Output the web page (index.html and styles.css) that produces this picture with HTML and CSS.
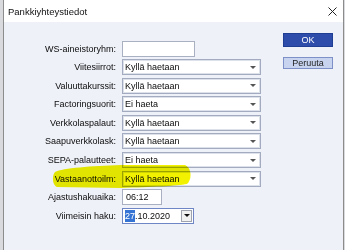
FILE: index.html
```html
<!DOCTYPE html>
<html lang="fi">
<head>
    <meta charset="UTF-8">
    <title>Pankkiyhteystiedot</title>
    <link rel="stylesheet" href="styles.css">
</head>
<body>

    <div class="window">
        <div class="titlebar">
            <span class="title">Pankkiyhteystiedot</span>
            <svg class="close" width="9" height="9" viewBox="0 0 9 9">
                <path d="M0.5 0.5 L8.5 8.5 M8.5 0.5 L0.5 8.5" stroke="#222" stroke-width="1"/>
            </svg>
        </div>

        <div class="content">
            <div class="form">
                <label>WS-aineistoryhm:</label>
                <div class="field ws"></div>

                <label>Viitesiirrot:</label>
                <div class="select"><span>Kyllä haetaan</span><i class="arrow"></i></div>

                <label>Valuuttakurssit:</label>
                <div class="select"><span>Kyllä haetaan</span><i class="arrow"></i></div>

                <label>Factoringsuorit:</label>
                <div class="select"><span>Ei haeta</span><i class="arrow"></i></div>

                <label>Verkkolaspalaut:</label>
                <div class="select"><span>Kyllä haetaan</span><i class="arrow"></i></div>

                <label>Saapuverkkolask:</label>
                <div class="select"><span>Kyllä haetaan</span><i class="arrow"></i></div>

                <label>SEPA-palautteet:</label>
                <div class="select"><span>Ei haeta</span><i class="arrow"></i></div>

                <label>Vastaanottoilm:</label>
                <div class="select"><span>Kyllä haetaan</span><i class="arrow"></i></div>

                <label>Ajastushakuaika:</label>
                <div class="field time">06:12</div>

                <label>Viimeisin haku:</label>
                <div class="field date">
                    <span><span class="selected">27</span>.10.2020</span>
                    <span class="drop"><i class="arrow dark"></i></span>
                </div>
            </div>

            <div class="buttons">
                <button class="ok">OK</button>
                <button class="cancel">Peruuta</button>
            </div>
        </div>

        <!-- yellow marker stroke drawn over the form -->
        <svg class="marker" viewBox="3 0 341 250" width="341" height="250">
            <path d="M54 172 C51 175, 51 185, 56 187 L120 188 C150 187, 176 186, 186 184 C191 180, 191 168, 184 165 L120 165 C90 166, 62 168, 54 172 Z" fill="#f2f200"/>
        </svg>
    </div>

</body>
</html>
```

FILE: styles.css
```css
body {
    margin: 0;
    background-color: #d9dadd;
    font-family: 'Liberation Sans', Arial, sans-serif;
    font-size: 9px;
    color: #0c0c0c;
}


.window {
    position: relative;
    margin-left: 3px;
    width: 339px;
    height: 250px;
    border-left: 1px solid #8c8c8c;
    border-right: 1px solid #8c8c8c;
    background-color: #eef1f8;
    overflow: hidden;
}


.titlebar {
    height: 22px;
    background-color: #ffffff;
    display: flex;
    align-items: center;
    justify-content: space-between;
    padding: 0 6px 0 4px;
}

.title {
    font-size: 9.5px;
    color: #111;
}

.close {
    display: block;
}


.content {
    display: flex;
    align-items: flex-start;
    padding: 11px 10px 0 12px;
}


.form {
    display: grid;
    grid-template-columns: 100px auto;
    grid-auto-rows: 16px;
    column-gap: 6px;
    row-gap: 2.6px;
    align-items: center;
    justify-items: start;
    margin-top: 7.5px;
}

.form label {
    justify-self: end;
    white-space: nowrap;
}


.field, .select {
    box-sizing: border-box;
    height: 16px;
    background-color: #ffffff;
    border: 1px solid #a9b0c2;
    display: flex;
    align-items: center;
    padding-left: 2px;
    white-space: nowrap;
}

.ws {
    width: 73px;
}

.time {
    width: 40px;
    height: 16px;
    padding-left: 3px;
}

.date {
    width: 72px;
    border-color: #6f86c6;
    justify-content: space-between;
    padding-right: 1px;
}

.selected {
    background-color: #3574d4;
    color: #ffffff;
    padding: 1px 0;
}

.drop {
    box-sizing: border-box;
    width: 11px;
    height: 12px;
    background-color: #f2f2f2;
    border: 1px solid #9ea3ad;
    display: flex;
    align-items: center;
    justify-content: center;
}


.select {
    width: 139px;
    justify-content: space-between;
    padding-right: 4px;
    border-color: #a3abc0;
    box-shadow: inset 0 0 0 1px #dde1ea;
}

.arrow {
    width: 0;
    height: 0;
    border-left: 3px solid transparent;
    border-right: 3px solid transparent;
    border-top: 3px solid #555;
}

.arrow.dark {
    border-top-color: #111;
}


.buttons {
    margin-left: auto;
    display: flex;
    flex-direction: column;
    gap: 10px;
}

.buttons button {
    box-sizing: border-box;
    width: 50px;
    font-family: 'Liberation Sans', Arial, sans-serif;
    font-size: 9px;
    padding: 0;
    cursor: pointer;
}

.ok {
    height: 14px;
    background-color: #2e4dab;
    border: 1px solid #203d94;
    color: #ffffff;
}

.cancel {
    height: 12px;
    background-color: #c8d4ef;
    border: 1px solid #7d90c8;
    color: #1e1e1e;
}


.marker {
    position: absolute;
    top: 0;
    left: 0;
    pointer-events: none;
    mix-blend-mode: multiply;
}
```
